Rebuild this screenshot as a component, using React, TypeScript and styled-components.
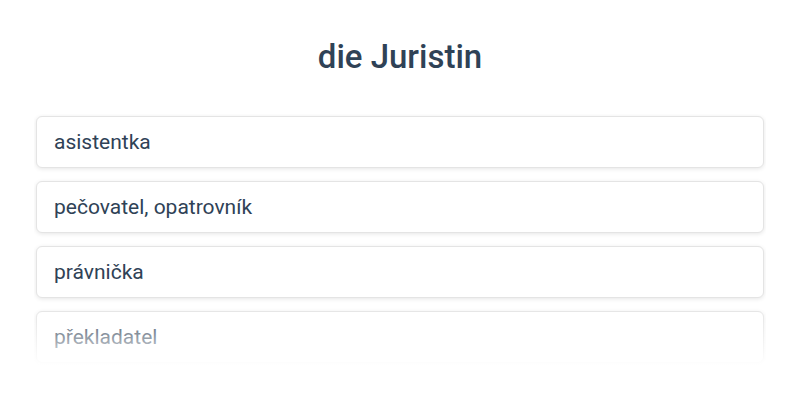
import React from "react";
import styled, { createGlobalStyle } from "styled-components";

const Global = createGlobalStyle`
  html, body { margin: 0; padding: 0; background: #ffffff; }
  body { font-family: Roboto, "Noto Sans", "Liberation Sans", sans-serif; }
`;

const Page = styled.main`
  width: 800px;
  box-sizing: border-box;
  padding: 36px 36px 0;
  display: flex;
  flex-direction: column;
  align-items: stretch;
`;

const Title = styled.h1`
  margin: 0 0 38px;
  text-align: center;
  font-size: 33px;
  line-height: 42px;
  font-weight: 500;
  color: #2f4256;
`;

const ListWrap = styled.div`
  position: relative;
  height: 250px;
  overflow: hidden;
  padding: 2px 2px 0;
  margin: -2px -2px 0;
`;

const List = styled.ul`
  list-style: none;
  margin: 0;
  padding: 0;
  display: flex;
  flex-direction: column;
  gap: 13px;
`;

const Fade = styled.div`
  position: absolute;
  left: 0;
  right: 0;
  bottom: 0;
  height: 60px;
  background: linear-gradient(to bottom, rgba(255,255,255,0) 0%, rgba(255,255,255,0.45) 50%, rgba(255,255,255,1) 100%);
  pointer-events: none;
`;

const Card = styled.li`
  box-sizing: border-box;
  height: 52px;
  display: flex;
  align-items: center;
  padding: 0 17px;
  background: #ffffff;
  border: 1px solid #e4e4e4;
  border-radius: 6px;
  box-shadow: 0 1px 4px rgba(0, 0, 0, 0.1);
  font-size: 21px;
  color: #2f4256;
`;

const items = ["asistentka", "pečovatel, opatrovník", "právnička", "překladatel"];

export default function App() {
  return (
    <>
      <Global />
      <Page>
        <Title>die Juristin</Title>
        <ListWrap>
          <List>
            {items.map((t) => (
              <Card key={t}>{t}</Card>
            ))}
          </List>
          <Fade />
        </ListWrap>
      </Page>
    </>
  );
}
